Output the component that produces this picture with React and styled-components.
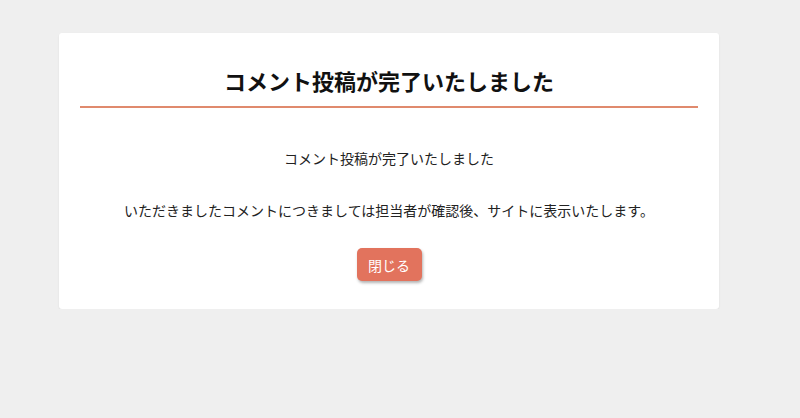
import React from "react";
import styled, { createGlobalStyle } from "styled-components";

const GlobalStyle = createGlobalStyle`
  html, body {
    margin: 0;
    padding: 0;
    background: #efefef;
    font-family: "Noto Sans CJK JP", "Noto Sans", sans-serif;
    color: #222;
  }
`;

const Page = styled.div`
  padding: 33px 0 0 59px;
`;

const Card = styled.div`
  width: 660px;
  box-sizing: border-box;
  background: #fff;
  border-radius: 3px;
  box-shadow: 0 1px 2px rgba(0, 0, 0, 0.08);
  padding: 30px 21px 28px;
  text-align: center;
`;

const Title = styled.h1`
  margin: 0;
  padding-bottom: 9px;
  font-size: 22px;
  line-height: 34px;
  font-weight: bold;
  color: #111;
  border-bottom: 2px solid #e08a6d;
`;

const Text = styled.p`
  margin: ${(props) => props.marginTop || "0"} 0 0;
  font-size: 14px;
  line-height: 20px;
  color: #222;
`;

const CloseButton = styled.button`
  margin-top: 28px;
  width: 65px;
  height: 33px;
  border: none;
  border-radius: 5px;
  background: #e2735d;
  color: #fff;
  font-family: inherit;
  font-size: 14px;
  box-shadow: 1px 2px 3px rgba(0, 0, 0, 0.3);
  cursor: pointer;
`;

export default function App() {
  return (
    <>
      <GlobalStyle />
      <Page>
        <Card>
          <Title>コメント投稿が完了いたしました</Title>
          <Text marginTop="40px">コメント投稿が完了いたしました</Text>
          <Text marginTop="32px">
            いただきましたコメントにつきましては担当者が確認後、サイトに表示いたします。
          </Text>
          <CloseButton>閉じる</CloseButton>
        </Card>
      </Page>
    </>
  );
}
